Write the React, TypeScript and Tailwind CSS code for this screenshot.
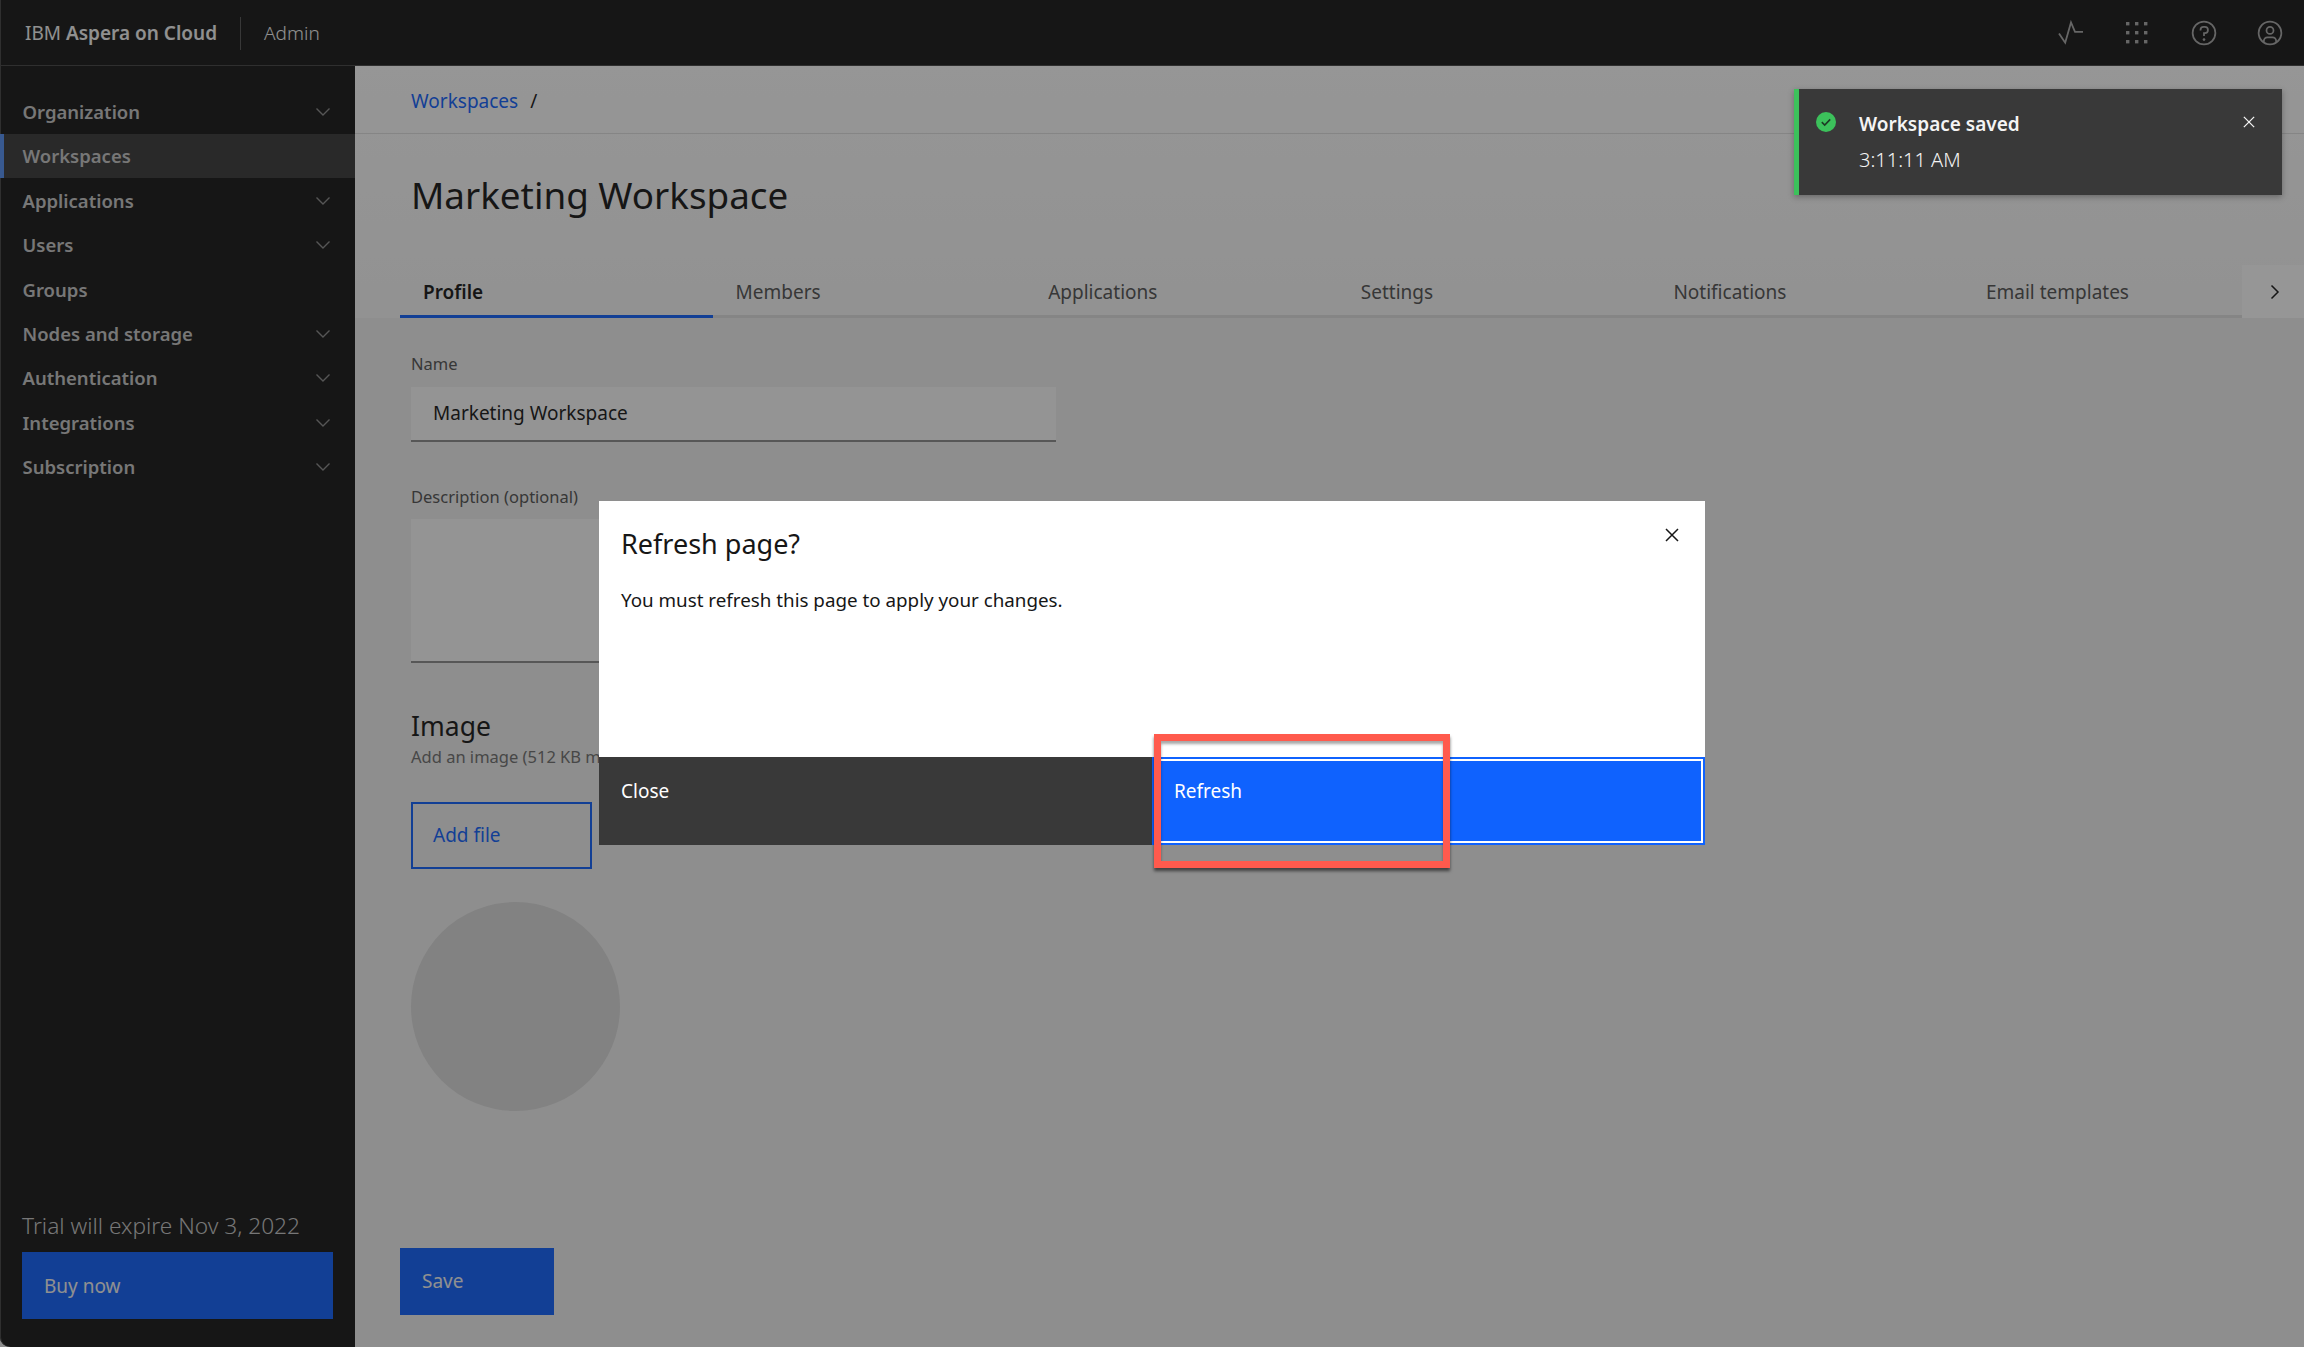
const FONT = "font-['Noto_Sans','Open_Sans',sans-serif]";

const nav: [string, boolean][] = [
  ["Organization", true],
  ["Workspaces", false],
  ["Applications", true],
  ["Users", true],
  ["Groups", false],
  ["Nodes and storage", true],
  ["Authentication", true],
  ["Integrations", true],
  ["Subscription", true],
];
const tabs = ["Profile", "Members", "Applications", "Settings", "Notifications", "Email templates"];

function Chevron() {
  return (
    <svg width="16" height="10" viewBox="0 0 16 10" fill="none" stroke="#8a8a8a" strokeWidth="1.4">
      <path d="M1.5 1.5 8 8l6.5-6.5" />
    </svg>
  );
}

function Close({ color, size }: { color: string; size: number }) {
  return (
    <svg width={size} height={size} viewBox="0 0 14 14" fill="none" stroke={color} strokeWidth="1.5">
      <path d="M1 1l12 12M13 1 1 13" />
    </svg>
  );
}

function HeaderIcons() {
  return (
    <div className="flex items-center gap-[38.3px] pr-[20px]">
      <svg width="28" height="28" viewBox="0 0 28 28" fill="none" stroke="#a8a8a8" strokeWidth="1.8">
        <path d="M2 14.5l6.2 9.2L14 3.5l4 9.3h8" />
      </svg>
      <svg width="28" height="28" viewBox="0 0 28 28" fill="#a8a8a8">
        {[3, 12, 21].flatMap((y) =>
          [3, 12, 21].map((x) => <rect key={`${x}-${y}`} x={x} y={y} width="3.4" height="3.4" />),
        )}
      </svg>
      <svg width="28" height="28" viewBox="0 0 32 32" fill="#a8a8a8">
        <path d="M16,2A14,14,0,1,0,30,16,14,14,0,0,0,16,2Zm0,26A12,12,0,1,1,28,16,12,12,0,0,1,16,28Z" />
        <circle cx="16" cy="23.5" r="1.5" />
        <path d="M17,8H15.5A4.49,4.49,0,0,0,11,12.5V13h2v-.5A2.5,2.5,0,0,1,15.5,10H17a2.5,2.5,0,0,1,0,5H15v4.5h2V17a4.5,4.5,0,0,0,0-9Z" />
      </svg>
      <svg width="28" height="28" viewBox="0 0 32 32" fill="#a8a8a8">
        <path d="M16,8a5,5,0,1,0,5,5A5,5,0,0,0,16,8Zm0,8a3,3,0,1,1,3-3A3,3,0,0,1,16,16Z" />
        <path d="M16,2A14,14,0,1,0,30,16,14.0158,14.0158,0,0,0,16,2ZM10,26.3765V25a3.0033,3.0033,0,0,1,3-3h6a3.0033,3.0033,0,0,1,3,3v1.3765a11.8989,11.8989,0,0,1-12,0Zm13.9925-1.4507A5.0016,5.0016,0,0,0,19,20H13a5.0016,5.0016,0,0,0-4.9925,4.9258,12,12,0,1,1,15.985,0Z" />
      </svg>
    </div>
  );
}

export default function App() {
  return (
    <div className={`${FONT} relative flex h-[1347px] w-[2304px] flex-col overflow-hidden bg-[#f0f0f0]`}>
      <header className="flex h-[66px] shrink-0 items-center justify-between border-b border-[#444] bg-[#161616] shadow-[inset_1px_0_0_#444]">
        <div className="flex items-center pl-[25px] pt-[1px] text-[19px] text-[#f4f4f4]">
          <span>
            IBM <span className="font-semibold">Aspera on Cloud</span>
          </span>
          <span className="mx-[23px] h-[33px] w-px bg-[#555]" />
          <span className="font-light">Admin</span>
        </div>
        <HeaderIcons />
      </header>

      <div className="flex min-h-0 flex-1">
        <aside className="flex w-[355px] shrink-0 flex-col rounded-bl-[10px] bg-[#161616] pb-[28px] pt-[23.5px] text-[#c6c6c6] shadow-[inset_1px_0_0_#444]">
          {nav.map(([label, hasChevron]) => (
            <div
              key={label}
              className={`flex h-[44.45px] items-center justify-between pr-[24px] text-[18.5px] font-semibold ${
                label === "Workspaces" ? "border-l-[4px] border-[#5590f5] bg-[#393939] pl-[18.5px]" : "pl-[22.5px]"
              }`}
            >
              {label}
              {hasChevron && <Chevron />}
            </div>
          ))}
          <div className="mt-auto px-[22px]">
            <p className="mb-[9px] text-[22.7px] font-light">Trial will expire Nov 3, 2022</p>
            <div className="flex h-[67px] items-center bg-[#0f62fe] pl-[22px] pt-[1px] text-[19px] text-[#f4f4f4]">Buy now</div>
          </div>
        </aside>

        <main className="flex min-w-0 flex-1 flex-col text-[#161616]">
          <section className="bg-linear-to-b from-white to-[#f7f7f7]">
            <div className="flex h-[68px] items-center border-b border-[#e0e0e0] pl-[56px] pt-[3px] text-[19px]">
              <span className="text-[#0f62fe]">Workspaces</span>
              <span className="ml-[12px]">/</span>
            </div>
            <h1 className="pl-[56px] pt-[34.5px] text-[36.8px] leading-[52px]">Marketing Workspace</h1>
            <div className="mt-[44.5px] flex pl-[45px]">
              <div className="flex w-[1842px] overflow-hidden">
                {tabs.map((t) => (
                  <div
                    key={t}
                    className={`flex h-[53px] w-[312.6px] shrink-0 items-center border-b-[3px] pl-[23px] pt-[5px] text-[19px] ${
                      t === "Profile" ? "w-[311.5px] border-[#0f62fe] font-semibold" : "border-[#e0e0e0] text-[#525252]"
                    }`}
                  >
                    {t}
                  </div>
                ))}
              </div>
              <div className="flex flex-1 items-center justify-center bg-white pl-[4px]">
                <svg width="10" height="16" viewBox="0 0 10 16" fill="none" stroke="#161616" strokeWidth="1.5">
                  <path d="M1.5 1.5 8 8l-6.5 6.5" />
                </svg>
              </div>
            </div>
          </section>

          <section className="flex flex-1 flex-col pb-[32.5px] pl-[56px]">
            <label className="mt-[35px] text-[16.5px] leading-[22px] text-[#525252]">Name</label>
            <div className="mt-[11.5px] flex h-[55px] w-[645px] items-center border-b-2 border-[#8d8d8d] bg-[#fbfbfb] pl-[22px] text-[19px]">
              Marketing Workspace
            </div>
            <label className="mt-[44.5px] text-[16.5px] leading-[22px] text-[#525252]">Description (optional)</label>
            <div className="mt-[11px] h-[144px] w-[645px] border-b-2 border-[#8d8d8d] bg-[#fbfbfb]" />
            <h2 className="mt-[44.5px] text-[26.5px] leading-[36px]">Image</h2>
            <p className="mt-[1px] text-[16.5px] leading-[24px] text-[#6f6f6f]">Add an image (512 KB max)</p>
            <div className="mt-[33px] flex h-[67px] w-[181px] items-center border-2 border-[#0f62fe] pl-[20px] text-[19px] text-[#0f62fe]">
              Add file
            </div>
            <div className="mt-[33px] h-[209px] w-[209px] rounded-full bg-[#dadada]" />
            <div className="-ml-[11px] mt-auto flex h-[67px] w-[154px] items-center bg-[#0f62fe] pl-[22px] text-[19px] text-[#f4f4f4]">
              Save
            </div>
          </section>
        </main>
      </div>

      {/* dim layer */}
      <div className="absolute inset-0 z-10 bg-[#161616]/45" />

      {/* toast */}
      <div className="absolute left-[1794px] top-[89px] z-30 flex h-[106px] w-[488px] border-l-[5px] border-[#3cc15b] bg-[#393939] pl-[17px] text-[#f4f4f4] shadow-[0_2px_6px_rgba(0,0,0,0.3)]">
        <svg className="mt-[23px] shrink-0" width="20" height="20" viewBox="0 0 20 20">
          <circle cx="10" cy="10" r="10" fill="#3cc15b" />
          <path d="M5.8 10.2 8.7 13l5.5-5.6" fill="none" stroke="#1d3a25" strokeWidth="1.6" />
        </svg>
        <div className="ml-[23px] flex-1">
          <div className="mt-[21px] text-[19px] font-semibold leading-[28px]">Workspace saved</div>
          <div className="mt-[8px] text-[20px] font-light leading-[28px]">3:11:11 AM</div>
        </div>
        <div className="mr-[27px] mt-[27px]">
          <Close color="#f4f4f4" size={12} />
        </div>
      </div>

      {/* modal */}
      <div className="absolute left-[599px] top-[501px] z-30 flex h-[344px] w-[1106px] flex-col bg-white text-[#161616]">
        <div className="relative flex-1 px-[22px] pt-[25px]">
          <h3 className="text-[27px] leading-[36px]">Refresh page?</h3>
          <p className="mt-[24px] text-[18.8px] leading-[28px]">You must refresh this page to apply your changes.</p>
          <div className="absolute right-[26px] top-[27px]">
            <Close color="#161616" size={14} />
          </div>
        </div>
        <div className="flex h-[88px] text-[19px] text-white">
          <div className="w-[553px] bg-[#393939] pl-[22px] pt-[20px] leading-[28px]">Close</div>
          <div className="flex-1 border-[3px] border-[#0f62fe] bg-[#0f62fe] pl-[19px] pt-[17px] leading-[28px] outline-2 -outline-offset-4 outline-white">
            Refresh
          </div>
        </div>
      </div>

      {/* annotation */}
      <div className="absolute left-[1154px] top-[734px] z-40 h-[134px] w-[296px] border-[7px] border-[#ff5a4d] shadow-[0_3px_3px_rgba(0,0,0,0.55),inset_0_3px_3px_rgba(0,0,0,0.35)]" />
    </div>
  );
}
